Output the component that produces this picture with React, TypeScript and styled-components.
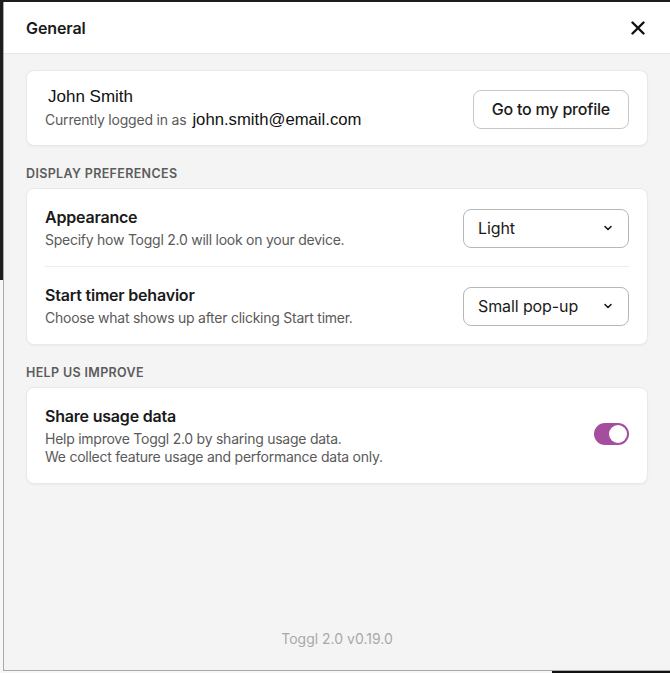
import React, { useState } from 'react'
import { createGlobalStyle, styled, css } from 'styled-components'

const GlobalStyle = createGlobalStyle`
  html, body {
    margin: 0;
    padding: 0;
    width: 670px;
    height: 673px;
    overflow: hidden;
  }
  body {
    font-family: Inter, "Noto Sans", sans-serif;
    -webkit-font-smoothing: antialiased;
  }
  * {
    box-sizing: border-box;
  }
`

const Desktop = styled.div`
  position: relative;
  width: 670px;
  height: 673px;
  display: flex;
  flex-direction: column;
  background-color: #f6f6f6;
`

const DarkPane = styled.div`
  height: 280px;
  background-color: #1d1d1d;
`

const LightPane = styled.div`
  flex: 1;
  display: flex;
  align-items: flex-end;
  justify-content: flex-end;
  background-color: #f7f7f7;
`

const BottomBar = styled.div`
  width: 118px;
  height: 3px;
  background-color: #111;
`

const Window = styled.div`
  position: absolute;
  left: 3px;
  top: 2px;
  width: 668px;
  height: 669px;
  display: flex;
  flex-direction: column;
  background-color: #f4f4f4;
  border: 1px solid #a9a9a9;
  border-top: none;
  border-right: none;
`

const Header = styled.header`
  height: 52px;
  flex-shrink: 0;
  display: flex;
  align-items: center;
  justify-content: space-between;
  padding: 0 26px 0 22px;
  background-color: #fff;
  border-bottom: 1px solid #e6e6e6;
`

const Title = styled.h1`
  margin: 0;
  font-size: 16px;
  font-weight: 600;
  letter-spacing: -0.1px;
  color: #1a1a1a;
`

const CloseButton = styled.button`
  display: flex;
  align-items: center;
  justify-content: center;
  width: 14px;
  height: 16px;
  padding: 0;
  border: none;
  background: none;
  color: #111;
  cursor: pointer;
`

const Content = styled.main`
  flex: 1;
  display: flex;
  flex-direction: column;
  padding: 16px 23px 0 22px;
`

const Card = styled.section`
  background-color: #fff;
  border: 1px solid #e9e9e9;
  border-radius: 8px;
  box-shadow: 0 1px 2px rgba(0, 0, 0, 0.04);
  padding: 0 18px;
`

const ProfileRow = styled.div`
  display: flex;
  align-items: center;
  justify-content: space-between;
  padding: 16px 0 14px;
`

const Name = styled.div`
  font-family: "Liberation Sans", Arial, sans-serif;
  font-size: 17px;
  line-height: 20px;
  color: #111;
  padding-left: 3px;
`

const LoggedIn = styled.div`
  display: flex;
  align-items: baseline;
  gap: 6px;
  margin-top: 2px;
  line-height: 22px;
  font-size: 14px;
  letter-spacing: -0.2px;
  color: #5a5a5a;

  span {
    font-family: "Liberation Sans", Arial, sans-serif;
    font-size: 16.7px;
    letter-spacing: 0;
    color: #111;
  }
`

const OutlineButton = styled.button`
  height: 39px;
  padding: 0 18px;
  font-family: inherit;
  font-size: 16px;
  font-weight: 500;
  letter-spacing: -0.2px;
  color: #1a1a1a;
  background-color: #fff;
  border: 1px solid #c8c8c8;
  border-radius: 8px;
  cursor: pointer;
`

const SectionLabel = styled.h2`
  margin: 20px 0 6px;
  font-size: 12.5px;
  line-height: 16px;
  font-weight: 600;
  letter-spacing: 0.35px;
  color: #5c5c5c;
`

const SettingRow = styled.div<{ $divider?: boolean }>`
  display: flex;
  align-items: center;
  justify-content: space-between;
  padding: 18px 0 17px;
  ${props => props.$divider && css`
    border-bottom: 1px solid #ececec;
  `}
`

const SettingTitle = styled.div`
  font-size: 16px;
  line-height: 20px;
  font-weight: 600;
  letter-spacing: -0.2px;
  color: #1a1a1a;
`

const SettingDesc = styled.div`
  margin-top: 4px;
  font-size: 14px;
  line-height: 18px;
  letter-spacing: -0.25px;
  color: #5a5a5a;
`

const Select = styled.button`
  width: 166px;
  height: 39px;
  display: flex;
  align-items: center;
  justify-content: space-between;
  padding: 0 15px 0 14px;
  font-family: inherit;
  font-size: 16px;
  letter-spacing: -0.1px;
  color: #1a1a1a;
  background-color: #fff;
  border: 1px solid #b7b7b7;
  border-radius: 8px;
  cursor: pointer;
`

const Toggle = styled.button<{ $on: boolean }>`
  position: relative;
  width: 35px;
  height: 22px;
  margin-bottom: 4px;
  padding: 0;
  border: none;
  border-radius: 11px;
  background-color: ${props => (props.$on ? '#a54d9f' : '#cfcfcf')};
  cursor: pointer;

  &::after {
    content: '';
    position: absolute;
    top: 2px;
    left: ${props => (props.$on ? '15px' : '2px')};
    width: 18px;
    height: 18px;
    border-radius: 50%;
    background-color: #fff;
  }
`

const Footer = styled.footer`
  margin-top: auto;
  padding-bottom: 23px;
  text-align: center;
  font-size: 14px;
  line-height: 16px;
  color: #a9a9a9;
`

const Chevron = () => (
  <svg width="10" height="10" viewBox="0 0 10 10" fill="none">
    <path d="M2 3.5 L5 6.5 L8 3.5" stroke="#1a1a1a" strokeWidth="1.6" strokeLinecap="round" strokeLinejoin="round" />
  </svg>
)

const CloseIcon = () => (
  <svg width="14" height="14" viewBox="0 0 14 14" fill="none">
    <path d="M1.5 1.5 L12.5 12.5 M12.5 1.5 L1.5 12.5" stroke="currentColor" strokeWidth="2.4" strokeLinecap="round" />
  </svg>
)

export default function App() {
  const [shareData, setShareData] = useState(true)

  return (
    <Desktop>
      <GlobalStyle />
      <DarkPane />
      <LightPane>
        <BottomBar />
      </LightPane>
      <Window>
        <Header>
          <Title>General</Title>
          <CloseButton aria-label="Close">
            <CloseIcon />
          </CloseButton>
        </Header>
        <Content>
          <Card>
            <ProfileRow>
              <div>
                <Name>John Smith</Name>
                <LoggedIn>
                  Currently logged in as <span>john.smith@email.com</span>
                </LoggedIn>
              </div>
              <OutlineButton>Go to my profile</OutlineButton>
            </ProfileRow>
          </Card>

          <SectionLabel>DISPLAY PREFERENCES</SectionLabel>
          <Card>
            <SettingRow $divider>
              <div>
                <SettingTitle>Appearance</SettingTitle>
                <SettingDesc>Specify how Toggl 2.0 will look on your device.</SettingDesc>
              </div>
              <Select>
                Light
                <Chevron />
              </Select>
            </SettingRow>
            <SettingRow>
              <div>
                <SettingTitle>Start timer behavior</SettingTitle>
                <SettingDesc>Choose what shows up after clicking Start timer.</SettingDesc>
              </div>
              <Select>
                Small pop-up
                <Chevron />
              </Select>
            </SettingRow>
          </Card>

          <SectionLabel>HELP US IMPROVE</SectionLabel>
          <Card>
            <SettingRow>
              <div>
                <SettingTitle>Share usage data</SettingTitle>
                <SettingDesc>
                  Help improve Toggl 2.0 by sharing usage data.
                  <br />
                  We collect feature usage and performance data only.
                </SettingDesc>
              </div>
              <Toggle $on={shareData} onClick={() => setShareData(!shareData)} aria-label="Share usage data" />
            </SettingRow>
          </Card>

          <Footer>Toggl 2.0 v0.19.0</Footer>
        </Content>
      </Window>
    </Desktop>
  )
}
